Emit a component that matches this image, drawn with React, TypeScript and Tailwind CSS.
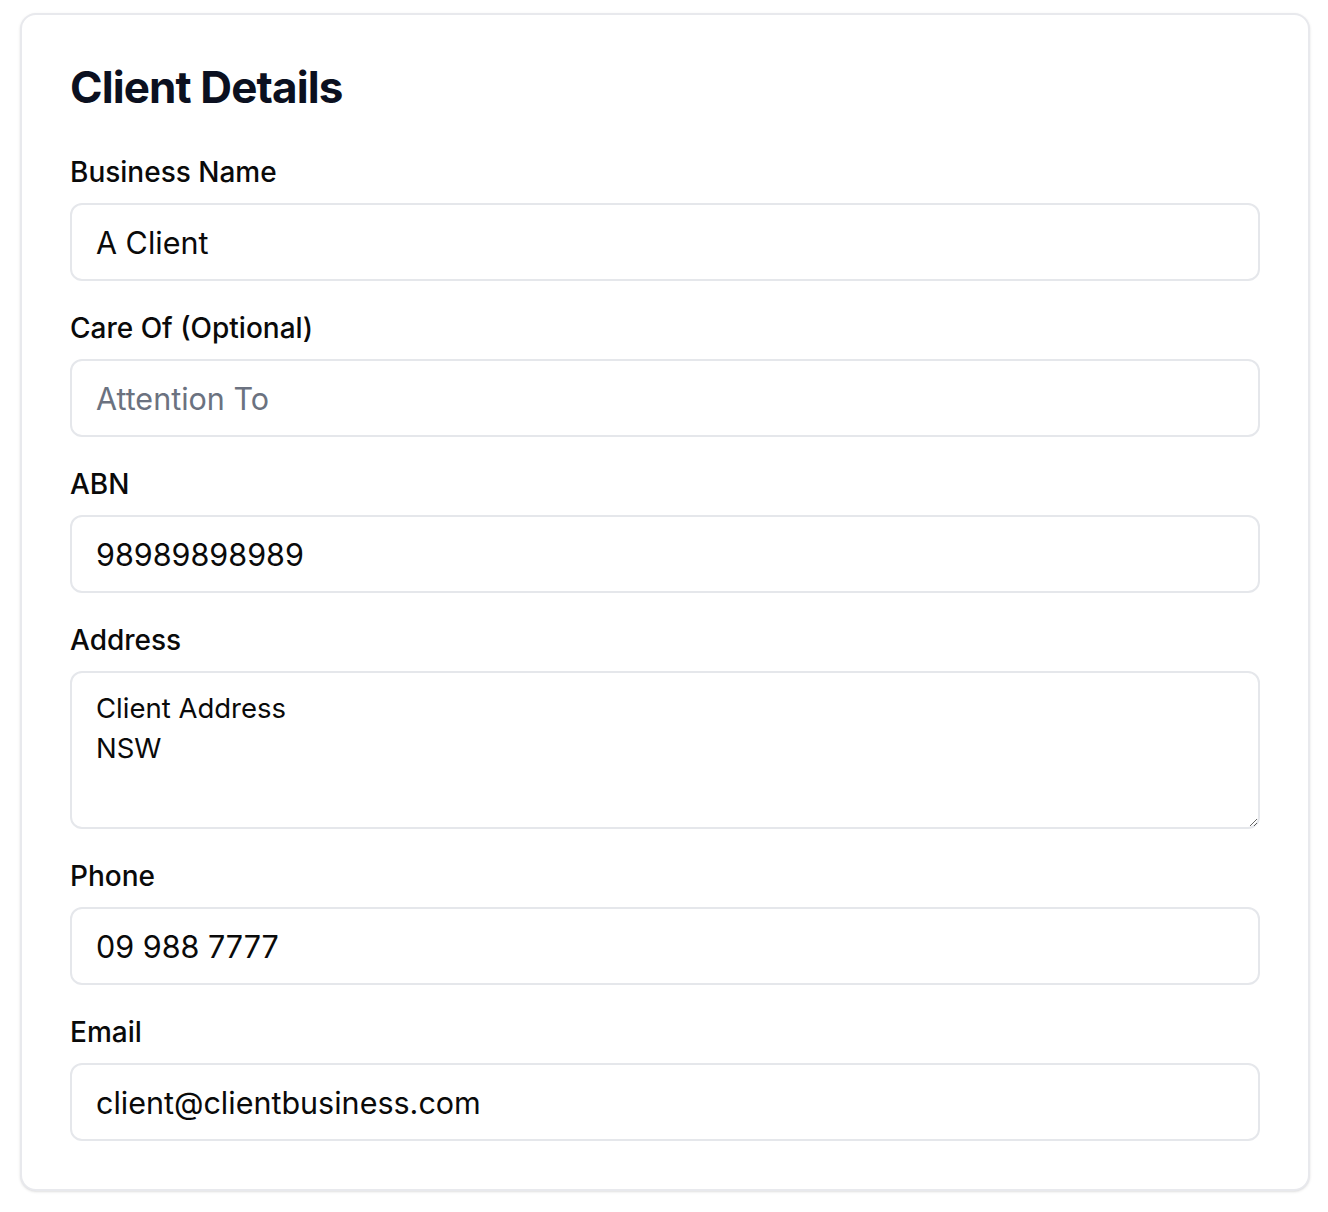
import React from 'react';

const font = { fontFamily: 'Inter, "Noto Sans", sans-serif' };

function Field({ label, children }: { label: string; children: React.ReactNode }) {
  return (
    <div className="flex flex-col">
      <label className="mb-[11px] block h-[40px] text-[28px] leading-[40px] font-medium text-[#0a0a0a]">
        {label}
      </label>
      {children}
    </div>
  );
}

const inputClass =
  'h-[78px] w-full rounded-[12px] border-2 border-[#e5e7eb] bg-white px-[24px] text-[30.5px] text-[#0a0a0a] placeholder:text-[#6b7280] outline-none';

export default function App() {
  return (
    <div className="min-h-[1212px] bg-white px-[20px] pt-[13px]" style={font}>
      <div className="w-[1290px] rounded-[16px] border-2 border-[#e8e9ed] bg-white px-[48px] pt-[40px] pb-[48px] shadow-sm">
        <h1 className="mb-[33px] text-[44px] leading-[64px] font-bold tracking-[-0.02em] text-[#0b1020]">
          Client Details
        </h1>

        <div className="flex flex-col gap-[27px]">
          <Field label="Business Name">
            <input className={inputClass} defaultValue="A Client" />
          </Field>

          <Field label="Care Of (Optional)">
            <input className={inputClass} placeholder="Attention To" />
          </Field>

          <Field label="ABN">
            <input className={inputClass} defaultValue="98989898989" />
          </Field>

          <Field label="Address">
            <textarea
              className="h-[158px] w-full rounded-[12px] border-2 border-[#e5e7eb] bg-white px-[24px] py-[15px] text-[27.5px] leading-[40px] text-[#0a0a0a] outline-none"
              defaultValue={'Client Address\nNSW'}
            />
          </Field>

          <Field label="Phone">
            <input className={inputClass} defaultValue="09 988 7777" />
          </Field>

          <Field label="Email">
            <input className={inputClass} defaultValue="client@clientbusiness.com" />
          </Field>
        </div>
      </div>
    </div>
  );
}
